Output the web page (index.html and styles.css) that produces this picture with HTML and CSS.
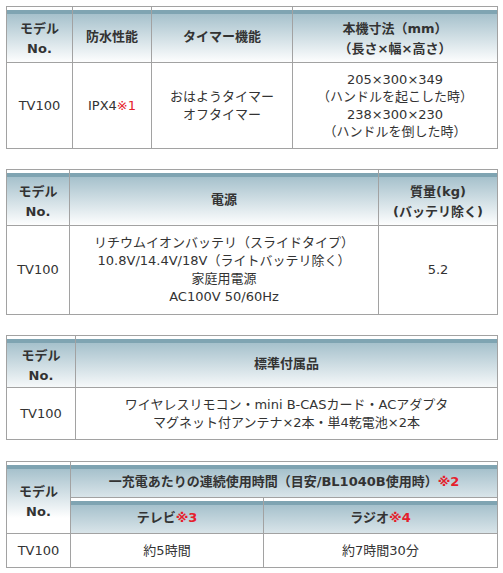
FILE: index.html
```html
<!DOCTYPE html>
<html lang="ja">
<head>
<meta charset="utf-8">
<title>TV100 仕様</title>
<link rel="stylesheet" href="styles.css">
</head>
<body>
<div class="page">

  <div class="spec spec-1">
    <div class="cell th two"><p class="in">モデル<br>No.</p></div>
    <div class="cell th"><p class="in">防水性能</p></div>
    <div class="cell th"><p class="in">タイマー機能</p></div>
    <div class="cell th two"><p class="in">本機寸法（mm）<br>（長さ×幅×高さ）</p></div>
    <div class="cell td"><p class="in">TV100</p></div>
    <div class="cell td"><p class="in">IPX4<span class="note">※1</span></p></div>
    <div class="cell td"><p class="in">おはようタイマー<br>オフタイマー</p></div>
    <div class="cell td dims"><p class="in">205×300×349<br>（ハンドルを起こした時）<br>238×300×230<br>（ハンドルを倒した時）</p></div>
  </div>

  <div class="spec spec-2">
    <div class="cell th two"><p class="in">モデル<br>No.</p></div>
    <div class="cell th"><p class="in">電源</p></div>
    <div class="cell th two"><p class="in">質量(kg)<br>(バッテリ除く)</p></div>
    <div class="cell td"><p class="in">TV100</p></div>
    <div class="cell td"><p class="in">リチウムイオンバッテリ（スライドタイプ）<br>10.8V/14.4V/18V（ライトバッテリ除く）<br>家庭用電源<br>AC100V 50/60Hz</p></div>
    <div class="cell td"><p class="in">5.2</p></div>
  </div>

  <div class="spec spec-3">
    <div class="cell th two"><p class="in">モデル<br>No.</p></div>
    <div class="cell th"><p class="in">標準付属品</p></div>
    <div class="cell td"><p class="in">TV100</p></div>
    <div class="cell td"><p class="in">ワイヤレスリモコン・mini B-CASカード・ACアダプタ<br>マグネット付アンテナ×2本・単4乾電池×2本</p></div>
  </div>

  <div class="spec spec-4">
    <div class="cell th two model"><p class="in">モデル<br>No.</p></div>
    <div class="cell th wide"><p class="in">一充電あたりの連続使用時間（目安/BL1040B使用時）<span class="note">※2</span></p></div>
    <div class="cell th"><p class="in">テレビ<span class="note">※3</span></p></div>
    <div class="cell th"><p class="in">ラジオ<span class="note">※4</span></p></div>
    <div class="cell td"><p class="in">TV100</p></div>
    <div class="cell td"><p class="in">約5時間</p></div>
    <div class="cell td"><p class="in">約7時間30分</p></div>
  </div>

</div>
</body>
</html>
```

FILE: styles.css
```css
html, body {
  margin: 0;
  padding: 0;
  background: #ffffff;
}

body {
  font-family: "DejaVu Sans", "Noto Sans CJK JP", sans-serif;
  font-size: 13px;
  color: #333333;
}

.page {
  padding: 6px 0 0 6px;
}

.spec {
  display: grid;
  width: 492px;
  box-sizing: border-box;
  border-top: 1px solid #a2a2a2;
  border-left: 1px solid #a2a2a2;
  margin-bottom: 20px;
}

.spec-1 {
  grid-template-columns: 66px 79px 141px 205px;
  grid-template-rows: 56px 86px;
}

.spec-2 {
  grid-template-columns: 63px 309px 119px;
  grid-template-rows: 56px 89px;
}

.spec-3 {
  grid-template-columns: 69px 422px;
  grid-template-rows: 52px 52px;
  margin-bottom: 21px;
}

.spec-4 {
  grid-template-columns: 64px 193px 234px;
  grid-template-rows: 36px 36px 34px;
}

.cell {
  box-sizing: border-box;
  border-right: 1px solid #a2a2a2;
  border-bottom: 1px solid #a2a2a2;
  display: flex;
  justify-content: center;
  align-items: center;
  text-align: center;
  white-space: nowrap;
}

.in {
  margin: 0;
}

.th {
  font-weight: bold;
  line-height: 20px;
  padding-top: 4px;
  background: linear-gradient(to bottom,
    #ffffff 0px, #ffffff 3px,
    #7fa4b2 3px, #7fa4b2 7px,
    #a6c1cc 7px, #ffffff 56px, #ffffff 100%);
}

.th.two {
  padding-top: 8px;
}

.td {
  line-height: 18px;
}

.dims {
  line-height: 17.4px;
}

.note {
  color: #e5202c;
}

.spec-4 .model {
  grid-row: 1 / span 2;
}

.spec-4 .wide {
  grid-column: 2 / span 2;
}
```
